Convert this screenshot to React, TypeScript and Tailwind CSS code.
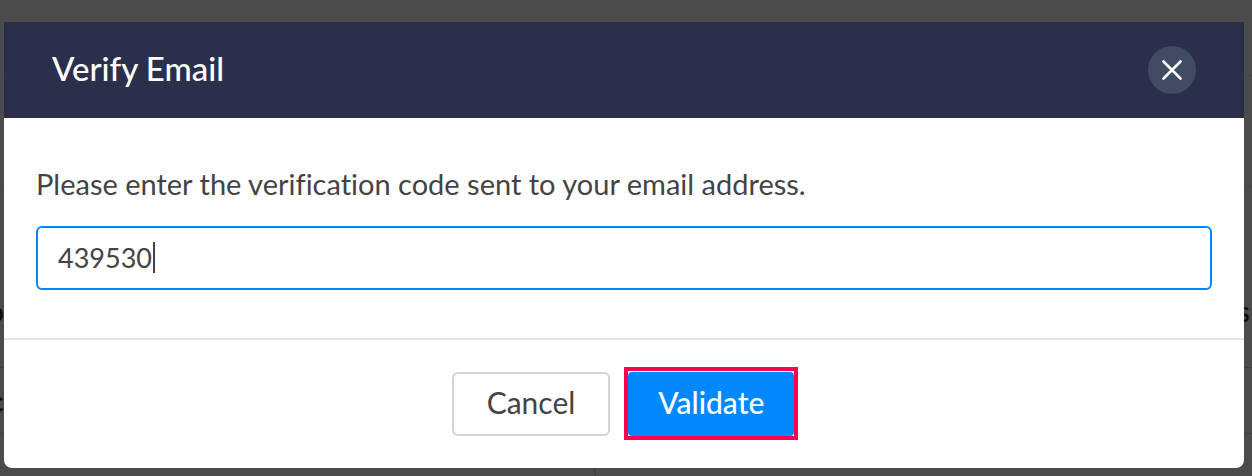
import { useState } from 'react';

// Faint remains of the page under the dimmed overlay
function Backdrop() {
  return (
    <div
      aria-hidden="true"
      className="absolute inset-0 flex flex-col overflow-hidden text-[28px] leading-8 font-medium text-[#0c0c0c]"
    >
      <div className="h-[76px] shrink-0 border-b border-[#454545]" />
      <div className="h-[111px] shrink-0 border-b border-[#454545]" />
      <div className="flex h-[181px] shrink-0 items-end justify-between border-b border-[#414141] pr-0.5 pb-10">
        <span className="-ml-3">o</span>
        <span>s</span>
      </div>
      <div className="flex h-[66px] shrink-0 items-center border-b border-[#414141]">
        <span className="-ml-2.5 font-bold">c</span>
      </div>
      <div className="h-[33px] shrink-0" />
      <div className="w-[596px] grow rounded-tr border-t border-r-2 border-[#424242]" />
    </div>
  );
}

export default function App() {
  const [code, setCode] = useState('439530');

  return (
    <div className="relative min-h-screen bg-[#4b4b4b] px-1 pt-[22px] pb-2 font-['Lato',sans-serif] text-[#444] [font-variant-ligatures:none]">
      <Backdrop />

      <div
        role="dialog"
        aria-labelledby="verify-title"
        className="relative mr-1 overflow-hidden rounded-b-lg bg-white"
      >
        {/* Header */}
        <header className="flex h-24 items-center justify-between bg-[#2c2f4c] px-12">
          <h2 id="verify-title" className="pb-1 text-[33px] leading-10 font-medium text-white">
            Verify Email
          </h2>
          <button
            type="button"
            aria-label="Close"
            className="flex size-12 items-center justify-center rounded-full bg-[#3f4c64] text-white"
          >
            <svg viewBox="0 0 20 20" className="size-5" fill="none" stroke="currentColor" strokeWidth="2.6" strokeLinecap="round">
              <path d="M1.5 1.5 18.5 18.5M18.5 1.5 1.5 18.5" />
            </svg>
          </button>
        </header>

        {/* Code field */}
        <div className="px-8 pt-[46px] pb-12">
          <label htmlFor="code" className="block pb-[22px] text-[29px] leading-10">
            Please enter the verification code sent to your email address.
          </label>
          <div className="relative">
            <input
              id="code"
              type="text"
              inputMode="numeric"
              value={code}
              onChange={(e) => setCode(e.target.value)}
              className="block h-16 w-full rounded-md border-2 border-[#0088ff] bg-white px-5 pb-0.5 text-[27px] caret-transparent outline-none"
            />
            <span className="absolute top-4 left-[117px] h-[31px] w-0.5 bg-[#444]" />
          </div>
        </div>

        {/* Actions */}
        <footer className="flex items-end justify-center gap-3.5 border-t-2 border-[#e6e6e6] pt-[27px] pb-7 pl-0.5">
          <button
            type="button"
            className="mb-1 h-16 rounded-md border-2 border-[#d4d4d4] bg-white px-[33px] pb-1 text-[30px] leading-10"
          >
            Cancel
          </button>
          <div className="border-4 border-[#ff0050] pt-px">
            <button type="button" className="block h-16 rounded-sm bg-[#0088ff] px-[30px] pb-1 text-[30px] leading-10 font-medium text-white">
              Validate
            </button>
          </div>
        </footer>
      </div>
    </div>
  );
}
